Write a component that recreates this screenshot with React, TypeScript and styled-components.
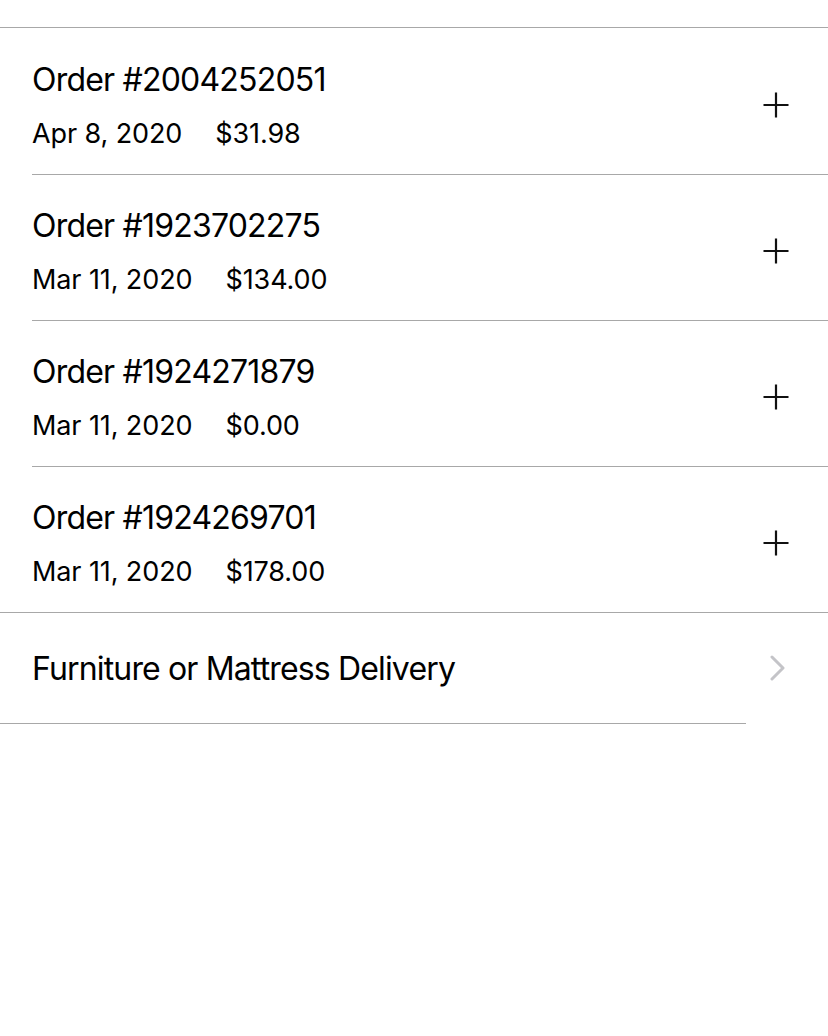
import React from 'react';
import styled, { createGlobalStyle } from 'styled-components';

const GlobalStyle = createGlobalStyle`
  html, body {
    margin: 0;
    padding: 0;
    background: #ffffff;
  }
  body {
    font-family: Inter, "Noto Sans", "Liberation Sans", sans-serif;
    color: #000000;
    -webkit-font-smoothing: antialiased;
  }
`;

const Screen = styled.div`
  width: 828px;
  min-height: 1036px;
  background: #ffffff;
`;

const TopSpacer = styled.div`
  height: 27px;
  border-bottom: 1px solid #a8a8a8;
  margin-bottom: 1px;
`;

const OrderList = styled.div`
  display: flex;
  flex-direction: column;
`;

const OrderRowWrap = styled.div<{ $last?: boolean }>`
  display: flex;
  align-items: center;
  height: 145px;
  padding-left: ${(p) => (p.$last ? '32px' : '0')};
  margin-left: ${(p) => (p.$last ? '0' : '32px')};
  border-bottom: 1px solid #a8a8a8;
`;

const OrderInfo = styled.div`
  flex: 1;
  display: flex;
  flex-direction: column;
  padding-top: 8px;
`;

const OrderTitle = styled.div`
  font-size: 32px;
  line-height: 40px;
  letter-spacing: -0.8px;
`;

const OrderMeta = styled.div`
  display: flex;
  gap: 33px;
  margin-top: 17px;
  font-size: 27px;
  line-height: 34px;
  letter-spacing: -0.1px;
`;

const PlusButton = styled.div`
  width: 26px;
  height: 26px;
  margin-right: 39px;
  margin-top: 6px;
  display: flex;
  align-items: center;
  justify-content: center;
`;

const DeliveryRow = styled.div`
  display: flex;
  align-items: center;
  height: 111px;
  padding-left: 32px;
  width: 746px;
  box-sizing: border-box;
  border-bottom: 1px solid #a8a8a8;
`;

const DeliveryLabel = styled.div`
  flex: 1;
  font-size: 32px;
  letter-spacing: -0.85px;
`;

const ChevronBox = styled.div`
  width: 16px;
  height: 26px;
  margin-right: -40px;
  display: flex;
  align-items: center;
`;

const PlusIcon = () => (
  <svg width="26" height="26" viewBox="0 0 26 26">
    <path d="M13 0.5v25M0.5 13h25" stroke="#111" strokeWidth="2.2" fill="none" />
  </svg>
);

const ChevronIcon = () => (
  <svg width="16" height="26" viewBox="0 0 16 26">
    <path d="M2 2l11 11-11 11" stroke="#c4c4c8" strokeWidth="3" fill="none" strokeLinecap="round" strokeLinejoin="round" />
  </svg>
);

interface Order {
  id: string;
  date: string;
  total: string;
}

const orders: Order[] = [
  { id: '2004252051', date: 'Apr 8, 2020', total: '$31.98' },
  { id: '1923702275', date: 'Mar 11, 2020', total: '$134.00' },
  { id: '1924271879', date: 'Mar 11, 2020', total: '$0.00' },
  { id: '1924269701', date: 'Mar 11, 2020', total: '$178.00' },
];

const OrderRow = ({ order, last }: { order: Order; last: boolean }) => (
  <OrderRowWrap $last={last}>
    <OrderInfo>
      <OrderTitle>Order #{order.id}</OrderTitle>
      <OrderMeta>
        <span>{order.date}</span>
        <span>{order.total}</span>
      </OrderMeta>
    </OrderInfo>
    <PlusButton>
      <PlusIcon />
    </PlusButton>
  </OrderRowWrap>
);

export default function App() {
  return (
    <Screen>
      <GlobalStyle />
      <TopSpacer />
      <OrderList>
        {orders.map((o, i) => (
          <OrderRow key={o.id} order={o} last={i === orders.length - 1} />
        ))}
      </OrderList>
      <DeliveryRow>
        <DeliveryLabel>Furniture or Mattress Delivery</DeliveryLabel>
        <ChevronBox>
          <ChevronIcon />
        </ChevronBox>
      </DeliveryRow>
    </Screen>
  );
}
